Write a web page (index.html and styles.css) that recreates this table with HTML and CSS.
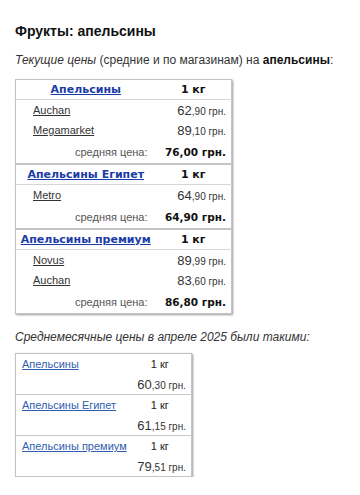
FILE: index.html
```html
<!DOCTYPE html>
<html lang="ru">
<head>
<meta charset="utf-8">
<title>Фрукты: апельсины</title>
<link rel="stylesheet" href="styles.css">
</head>
<body>
<h1 class="title">Фрукты: апельсины</h1>
<p class="intro"><i>Текущие цены</i> (средние и по магазинам) на <b>апельсины</b>:</p>

<table class="prices">
  <colgroup><col class="c1"><col class="c2"></colgroup>
  <tbody class="group">
    <tr class="head"><th><a href="#">Апельсины</a></th><th>1 кг</th></tr>
    <tr class="shop"><td><a href="#">Auchan</a></td><td class="price">62<small>,90 грн.</small></td></tr>
    <tr class="shop"><td><a href="#">Megamarket</a></td><td class="price">89<small>,10 грн.</small></td></tr>
    <tr class="avg"><td>средняя цена:</td><td class="avgprice">76,00 грн.</td></tr>
  </tbody>
  <tbody class="group">
    <tr class="head"><th><a href="#">Апельсины Египет</a></th><th>1 кг</th></tr>
    <tr class="shop"><td><a href="#">Metro</a></td><td class="price">64<small>,90 грн.</small></td></tr>
    <tr class="avg"><td>средняя цена:</td><td class="avgprice">64,90 грн.</td></tr>
  </tbody>
  <tbody class="group">
    <tr class="head"><th><a href="#">Апельсины премиум</a></th><th>1 кг</th></tr>
    <tr class="shop"><td><a href="#">Novus</a></td><td class="price">89<small>,99 грн.</small></td></tr>
    <tr class="shop"><td><a href="#">Auchan</a></td><td class="price">83<small>,60 грн.</small></td></tr>
    <tr class="avg"><td>средняя цена:</td><td class="avgprice">86,80 грн.</td></tr>
  </tbody>
</table>

<p class="intro second"><i>Среднемесячные цены в апреле 2025 были такими:</i></p>

<table class="monthly">
  <colgroup><col class="m1"><col class="m2"></colgroup>
  <tbody class="mgroup">
    <tr><td><a href="#">Апельсины</a></td><td class="unit">1 кг</td></tr>
    <tr><td></td><td class="price">60<small>,30 грн.</small></td></tr>
  </tbody>
  <tbody class="mgroup">
    <tr><td><a href="#">Апельсины Египет</a></td><td class="unit">1 кг</td></tr>
    <tr><td></td><td class="price">61<small>,15 грн.</small></td></tr>
  </tbody>
  <tbody class="mgroup">
    <tr><td><a href="#">Апельсины премиум</a></td><td class="unit">1 кг</td></tr>
    <tr><td></td><td class="price">79<small>,51 грн.</small></td></tr>
  </tbody>
</table>
</body>
</html>
```

FILE: styles.css
```css
html, body {
  margin: 0;
  background: #fff;
}
body {
  padding: 23px 15px 0;
  font-family: "Liberation Sans", Arial, sans-serif;
  color: #222;
}
.title {
  margin: 0 0 13px;
  font-size: 14px;
  line-height: 17px;
  font-weight: bold;
  color: #111;
}
.intro {
  margin: 0 0 11px;
  font-size: 12px;
  line-height: 15px;
  color: #333;
}
.intro b {
  color: #111;
}
.intro.second {
  margin: 16px 0 8px;
}

/* current prices table */
.prices {
  border-collapse: collapse;
  width: 216px;
  table-layout: fixed;
  border: 1px solid #c4c4c4;
  box-shadow: 1px 1px 2px rgba(0, 0, 0, 0.4);
}
.prices .c1 { width: 140px; }
.prices .c2 { width: 76px; }
.prices .group + .group {
  border-top: 2px solid #c4c4c4;
}
.prices th {
  height: 19px;
  padding: 0;
  text-align: center;
  font-family: "DejaVu Sans", Verdana, sans-serif;
  font-size: 11px;
  font-weight: bold;
  color: #111;
  border-bottom: 1px solid #d6d6d6;
  white-space: nowrap;
}
.prices th a {
  color: #1b3ca6;
  text-decoration: underline;
}
.prices td {
  padding: 0;
  white-space: nowrap;
}
.prices .shop td {
  height: 20px;
}
.prices .shop td:first-child {
  padding-left: 17px;
  font-size: 11px;
}
.prices .shop a {
  color: #333;
  text-decoration: underline;
}
.price {
  text-align: right;
  font-size: 13px;
  color: #333;
  padding-right: 5px !important;
}
.price small {
  font-size: 10px;
}
.prices .avg td {
  height: 23px;
}
.prices .avg td:first-child {
  text-align: right;
  padding-right: 8px;
  font-size: 11px;
  color: #555;
}
.avgprice {
  text-align: right;
  padding-right: 5px !important;
  font-family: "DejaVu Sans", Verdana, sans-serif;
  font-size: 10.5px;
  font-weight: bold;
  color: #111;
}

/* monthly table */
.monthly {
  border-collapse: collapse;
  width: 176px;
  table-layout: fixed;
  border: 1px solid #c4c4c4;
  box-shadow: 1px 1px 2px rgba(0, 0, 0, 0.4);
}
.monthly .m1 { width: 113px; }
.monthly .m2 { width: 63px; }
.monthly .mgroup + .mgroup {
  border-top: 1px solid #c8c8c8;
}
.monthly td {
  height: 20px;
  padding: 0;
  white-space: nowrap;
  font-size: 11px;
}
.monthly td:first-child {
  padding-left: 6px;
}
.monthly a {
  color: #2f5db0;
  text-decoration: underline;
}
.monthly .unit {
  text-align: center;
  color: #222;
}
.monthly .price {
  font-size: 13px;
}
.monthly .price small {
  font-size: 10px;
}
```
